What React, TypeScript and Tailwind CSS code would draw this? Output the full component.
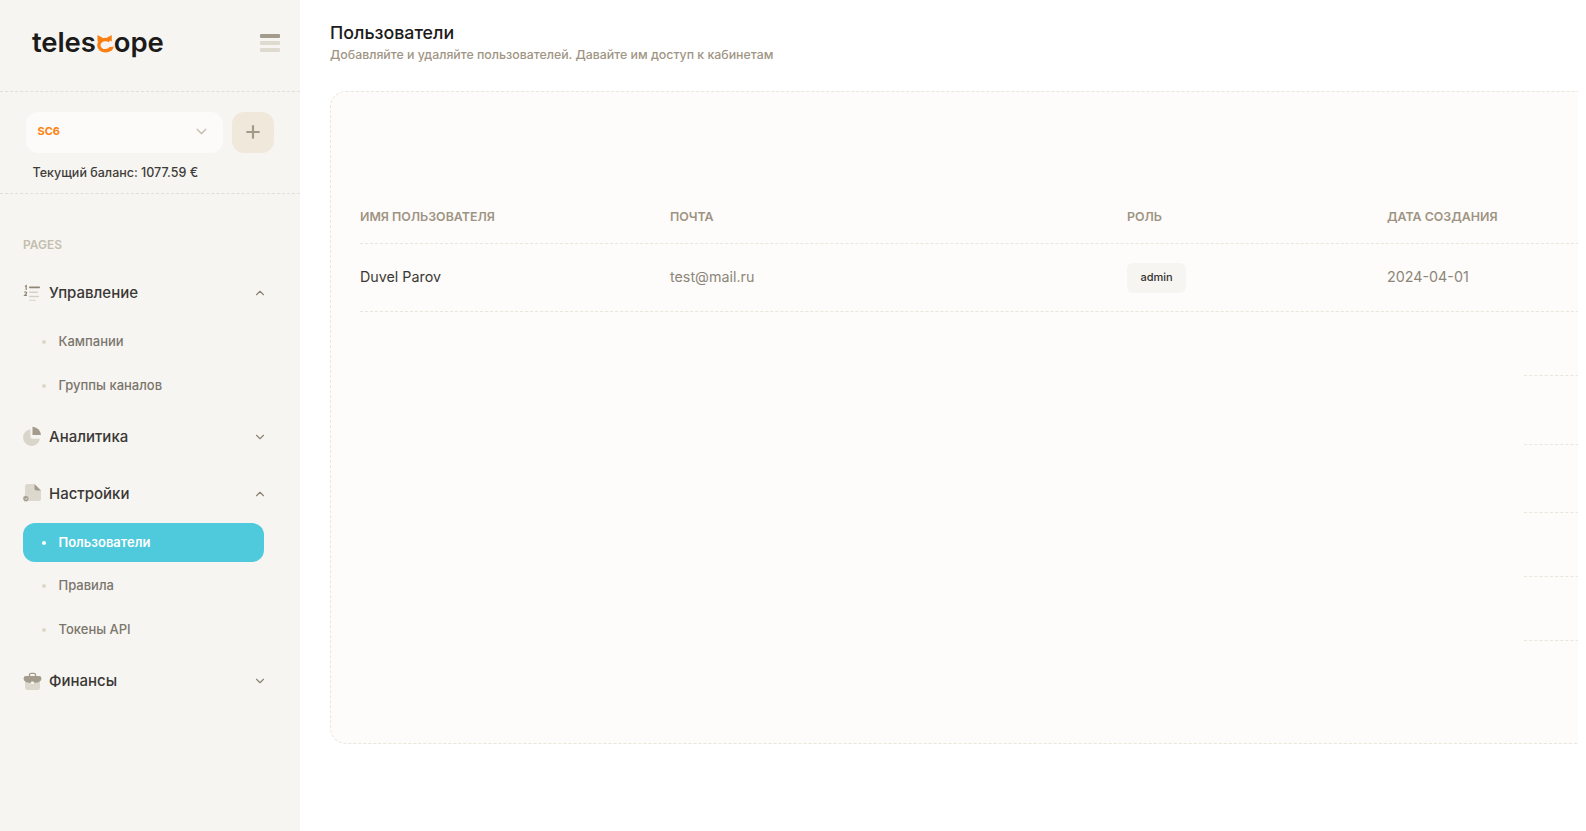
import { ChevronDown, ChevronUp, Plus } from 'lucide-react';

const font = "font-['Inter','Noto_Sans',sans-serif]";

function Logo() {
  return (
    <div className="flex items-center text-[27.5px] leading-none font-semibold tracking-[-0.1px] text-[#1c1b1a]">
      <span>teles</span>
      {/* cat-eared orange c */}
      <svg width="18" height="20" viewBox="0 0 19 20" className="mt-[2px]">
        <path d="M14.6 6.6 C13.2 5.6 11.6 5.2 10 5.2 C6 5.2 3 7.8 3 11.2 C3 14.6 6 17.2 10 17.2 C12.4 17.2 14.4 16.2 15.8 14.4" stroke="#f97f12" strokeWidth="3.6" fill="none" />
        <path d="M1.6 0.6 L7.4 3.6 L3.6 8 L1.6 7 Z" fill="#f97f12" />
        <path d="M16.6 0.6 L11 3.6 L16.6 7.4 Z" fill="#f97f12" />
        <path d="M14 13.4 L19 12.6 L16.6 17.2 L14 16.6 Z" fill="#f97f12" />
      </svg>
      <span>ope</span>
    </div>
  );
}

function MenuIcon() {
  return (
    <div className="flex w-5 flex-col gap-[3px]">
      <div className="h-1 rounded-[1px] bg-[#a39b8b]" />
      <div className="h-1 rounded-[1px] bg-[#dedad0]" />
      <div className="h-1 rounded-[1px] bg-[#dedad0]" />
    </div>
  );
}

function ListIcon() {
  return (
    <svg width="18" height="18" viewBox="0 0 18 18">
      <path d="M2 2.5 L3.2 1.6 V6" stroke="#8f8776" strokeWidth="1.2" fill="none" />
      <path d="M1.4 8.6 C2 7.4 4 7.8 3.6 9.2 L1.6 11.4 H4" stroke="#8f8776" strokeWidth="1.1" fill="none" />
      <rect x="6" y="2.6" width="11" height="1.6" rx="0.8" fill="#8f8776" />
      <rect x="6" y="7.4" width="9" height="1.5" rx="0.7" fill="#d5d0c4" />
      <rect x="6" y="11.8" width="10" height="1.4" rx="0.7" fill="#d5d0c4" />
      <rect x="6" y="15.8" width="7" height="1.2" rx="0.6" fill="#e0dcd1" />
    </svg>
  );
}

function PieIcon() {
  return (
    <svg width="20" height="20" viewBox="0 0 19 19" className="mt-[-2px] ml-[-1px]">
      <path d="M8 3 A8 8 0 1 0 17 12 L10 12 Q8 12 8 10 Z" fill="#d9d5ca" />
      <path d="M10 0.8 A8.4 8.4 0 0 1 18 8.6 L10 8.6 Z" fill="#a39b8b" />
    </svg>
  );
}

function FileIcon() {
  return (
    <svg width="20" height="20" viewBox="0 0 20 20" className="mt-[-2px] ml-[-1px]">
      <path d="M5.5 1 H12 L19 7.5 V15.5 Q19 18 16.5 18 H6 Q3 18 3 15.5 V3.5 Q3 1 5.5 1 Z" fill="#dcd8cd" />
      <path d="M12.5 1 L19 7.5 H14.5 Q12.5 7.5 12.5 5.5 Z" fill="#a39b8b" />
      <circle cx="4" cy="15.6" r="3.1" fill="#a39b8b" stroke="#f7f5f2" strokeWidth="0.6" />
      <path d="M2.8 15.6 L3.8 16.6 L5.4 14.8" stroke="#f7f5f2" strokeWidth="0.9" fill="none" />
    </svg>
  );
}

function CaseIcon() {
  return (
    <svg width="19" height="19" viewBox="0 0 19 19">
      <path d="M6.5 4 V2.8 Q6.5 1.4 8 1.4 H11 Q12.5 1.4 12.5 2.8 V4" stroke="#a39b8b" strokeWidth="1.3" fill="none" />
      <path d="M2 10 H17 V15.5 Q17 18 14.5 18 H4.5 Q2 18 2 15.5 Z" fill="#dcd8cd" />
      <path d="M3 4 H16 Q18.4 4 18.4 6.4 Q18.4 10.4 12 10.8 H7 Q0.6 10.4 0.6 6.4 Q0.6 4 3 4 Z" fill="#a39b8b" />
      <rect x="8" y="9.6" width="3" height="2.4" rx="0.6" fill="#f7f5f2" />
    </svg>
  );
}

function GroupHeader({ icon, label, open, className }: { icon: React.ReactNode; label: string; open: boolean; className: string }) {
  return (
    <div className={`flex h-10 items-center ${className}`}>
      <div className="flex w-[26px] justify-start">{icon}</div>
      <span className="flex-1 text-[15px] font-[450] text-[#3a3835]">{label}</span>
      {open ? (
        <ChevronUp size={14} className="mr-[10px] text-[#8c8576]" />
      ) : (
        <ChevronDown size={14} className="mr-[10px] text-[#8c8576]" />
      )}
    </div>
  );
}

function SubItem({ label, active }: { label: string; active?: boolean }) {
  return (
    <div className={`flex h-[39px] items-center rounded-xl pl-[19px] ${active ? 'mb-[-1px] bg-[#4fc9dc]' : ''}`}>
      <div className={`h-1 w-1 rounded-full ${active ? 'bg-white' : 'bg-[#dcd8cb]'}`} />
      <span className={`ml-[12.5px] text-[13px] ${active ? 'font-semibold text-white' : 'font-medium text-[#7b766c]'}`}>{label}</span>
    </div>
  );
}

function Sidebar() {
  return (
    <aside className="flex h-full w-[300px] shrink-0 flex-col bg-[#f7f5f2]">
      <div className="flex h-[92px] items-center justify-between border-b border-dashed border-[#e2dfd6] pr-5 pb-[5px] pl-8">
        <Logo />
        <MenuIcon />
      </div>

      <div className="h-[102px] border-b border-dashed border-[#e2dfd6] pt-5 pl-[26px]">
        <div className="flex gap-[9px]">
          <div className="flex h-[41px] w-[197px] items-center justify-between rounded-xl bg-[#fcfbf9] pr-[13px] pb-[2px] pl-[11.5px]">
            <span className="text-[11px] font-bold text-[#fb8312]">SC6</span>
            <ChevronDown size={17} className="text-[#c9c5b9]" />
          </div>
          <div className="flex h-[41px] w-[42px] items-center justify-center rounded-xl bg-[#f0e9db] pb-[1px]">
            <Plus size={20} strokeWidth={2.6} className="text-[#a19a89]" />
          </div>
        </div>
        <div className="mt-[11px] ml-[6.5px] text-[12.5px] leading-[18px] font-medium text-[#3f3d3a]">Текущий баланс: 1077.59 €</div>
      </div>

      <nav className="px-[23px] pt-[43px]">
        <div className="text-xs leading-4 font-semibold text-[#c4beaf]">PAGES</div>
        <GroupHeader className="mt-5" icon={<ListIcon />} label="Управление" open />
        <div className="mt-[9px] flex w-[241px] flex-col gap-[5px]">
          <SubItem label="Кампании" />
          <SubItem label="Группы каналов" />
        </div>
        <GroupHeader className="mt-3" icon={<PieIcon />} label="Аналитика" open={false} />
        <GroupHeader className="mt-[17px]" icon={<FileIcon />} label="Настройки" open />
        <div className="mt-[9px] flex w-[241px] flex-col gap-[5px]">
          <SubItem label="Пользователи" active />
          <SubItem label="Правила" />
          <SubItem label="Токены API" />
        </div>
        <GroupHeader className="mt-3" icon={<CaseIcon />} label="Финансы" open={false} />
      </nav>
    </aside>
  );
}

const columns = 'grid grid-cols-[310px_457px_260px_1fr]';

function UsersTable() {
  return (
    <div className="pl-[29px]">
      <div className={`${columns} h-[67px] items-end border-b border-dashed border-[#e9e6dc] pb-[18px] text-[12.4px] leading-4 font-semibold text-[#9f9483]`}>
        <div>ИМЯ ПОЛЬЗОВАТЕЛЯ</div>
        <div>ПОЧТА</div>
        <div>РОЛЬ</div>
        <div>ДАТА СОЗДАНИЯ</div>
      </div>
      <div className={`${columns} h-[68px] items-center border-b border-dashed border-[#e9e6dc] text-[14.3px]`}>
        <div className="mb-[2px] text-[#3a3835]">Duvel Parov</div>
        <div className="mb-[2px] text-[#8c8679]">test@mail.ru</div>
        <div>
          <span className="inline-flex h-[30px] w-[59px] items-center justify-center rounded-md bg-[#f7f5f2] text-[11px] font-medium text-[#33322f]">admin</span>
        </div>
        <div className="mb-[2px] text-[#8c8679]">2024-04-01</div>
      </div>
      {/* last column cells of the empty rows */}
      <div className="ml-[1164px] flex w-[60px] flex-col">
        <div className="h-16 border-b border-dashed border-[#e9e6dc]" />
        <div className="h-[69px] border-b border-dashed border-[#e9e6dc]" />
        <div className="h-[68px] border-b border-dashed border-[#e9e6dc]" />
        <div className="h-16 border-b border-dashed border-[#e9e6dc]" />
        <div className="h-16 border-b border-dashed border-[#e9e6dc]" />
      </div>
    </div>
  );
}

export default function App() {
  return (
    <div className={`flex h-[831px] overflow-hidden bg-white ${font}`}>
      <Sidebar />
      <main className="w-[1278px] shrink-0 overflow-hidden pt-[23px] pl-[30px]">
        <h1 className="text-[17.8px] leading-[20px] font-medium text-[#1c1b1a]">Пользователи</h1>
        <p className="mt-[2px] text-[12.35px] leading-[19px] font-medium text-[#a09584]">Добавляйте и удаляйте пользователей. Давайте им доступ к кабинетам</p>
        <div className="mt-[27px] h-[653px] w-[1320px] rounded-2xl border border-dashed border-[#e9e6dc] bg-[#fdfcfa] pt-[85px]">
          <UsersTable />
        </div>
      </main>
    </div>
  );
}
